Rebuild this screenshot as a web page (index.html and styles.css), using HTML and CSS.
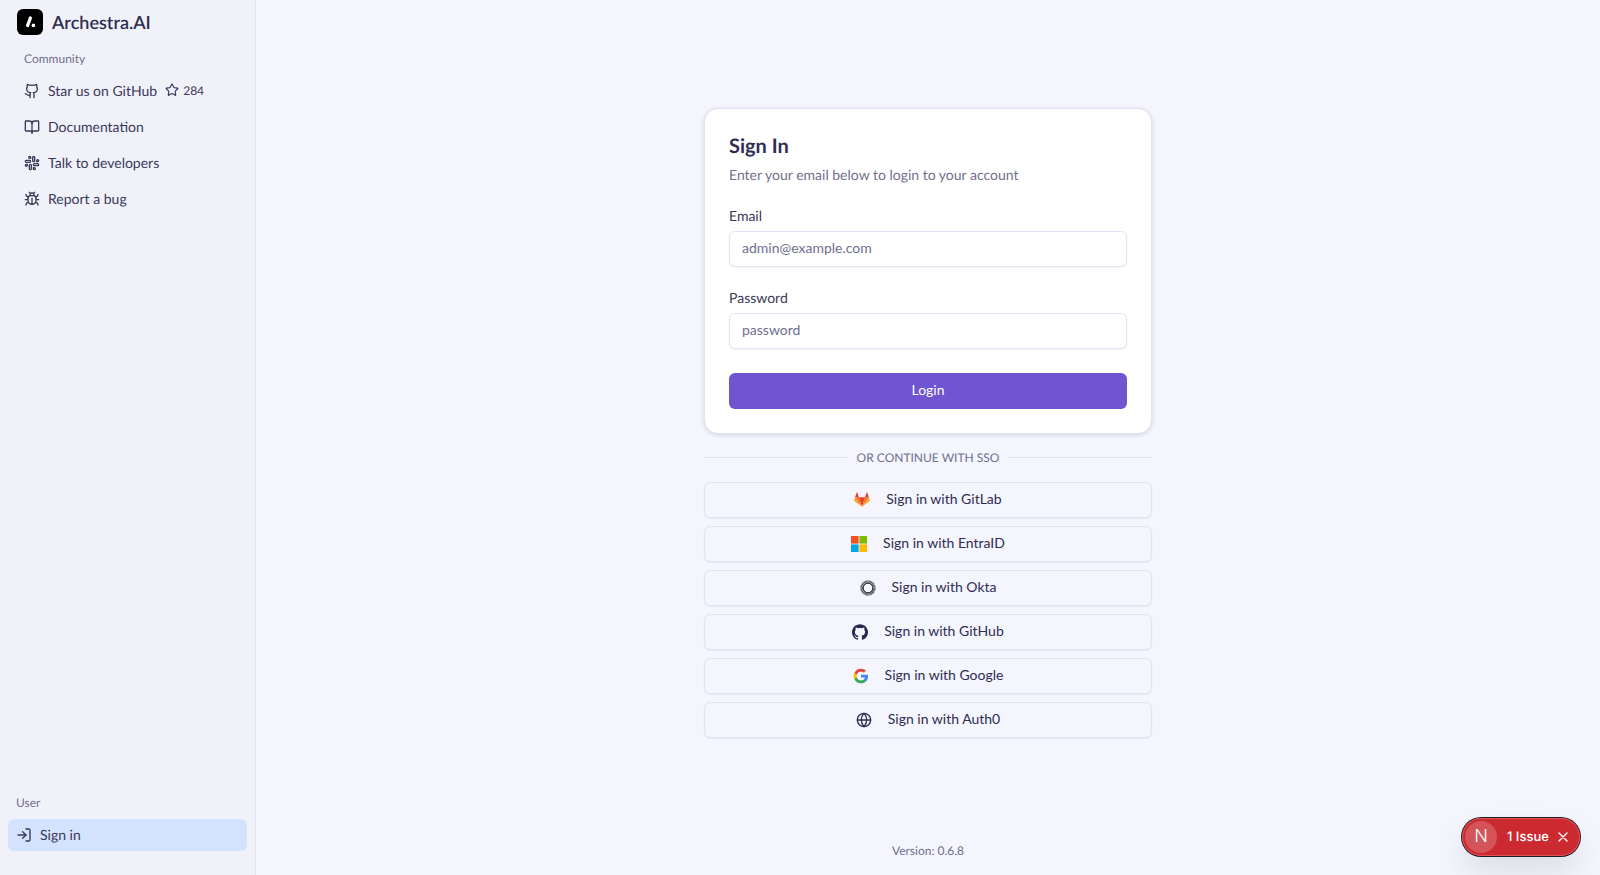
FILE: index.html
```html
<!DOCTYPE html>
<html lang="en">
<head>
    <meta charset="UTF-8">
    <meta name="viewport" content="width=device-width, initial-scale=1.0">
    <title>Archestra.AI - Sign In</title>
    <link rel="stylesheet" href="styles.css">
</head>
<body>
    <aside class="sidebar">
        <div class="brand">
            <span class="brand-logo">
                <svg viewBox="0 0 26 26" width="26" height="26"><path d="M13.4 9 10.6 16.6" stroke="#fff" stroke-width="3.2" stroke-linecap="round" fill="none"/><circle cx="16.4" cy="16.4" r="1.8" fill="#fff"/></svg>
            </span>
            <span class="brand-name">Archestra.AI</span>
        </div>

        <div class="group-label community-label">Community</div>
        <nav class="menu">
            <a class="menu-item" href="#">
                <svg class="icon" viewBox="0 0 24 24"><path d="M15 22v-4a4.8 4.8 0 0 0-1-3.5c3 0 6-2 6-5.5.08-1.25-.27-2.48-1-3.5.28-1.15.28-2.35 0-3.5 0 0-1 0-3 1.5-2.64-.5-5.36-.5-8 0C6 2 5 2 5 2c-.3 1.15-.3 2.35 0 3.5A5.403 5.403 0 0 0 4 9c0 3.5 3 5.5 6 5.5-.39.49-.68 1.05-.85 1.65-.17.6-.22 1.23-.15 1.85v4"/><path d="M9 18c-4.51 2-5-2-7-2"/></svg>
                <span>Star us on GitHub</span>
                <span class="stars">
                    <svg class="icon-star" viewBox="0 0 24 24"><path d="M11.525 2.295a.53.53 0 0 1 .95 0l2.31 4.679a2.123 2.123 0 0 0 1.595 1.16l5.166.756a.53.53 0 0 1 .294.904l-3.736 3.638a2.123 2.123 0 0 0-.611 1.878l.882 5.14a.53.53 0 0 1-.771.56l-4.618-2.428a2.122 2.122 0 0 0-1.973 0L6.396 21.01a.53.53 0 0 1-.77-.56l.881-5.139a2.122 2.122 0 0 0-.611-1.879L2.16 9.795a.53.53 0 0 1 .294-.906l5.165-.755a2.122 2.122 0 0 0 1.597-1.16z"/></svg>
                    284
                </span>
            </a>
            <a class="menu-item" href="#">
                <svg class="icon" viewBox="0 0 24 24"><path d="M12 7v14"/><path d="M3 18a1 1 0 0 1-1-1V4a1 1 0 0 1 1-1h5a4 4 0 0 1 4 4 4 4 0 0 1 4-4h5a1 1 0 0 1 1 1v13a1 1 0 0 1-1 1h-6a3 3 0 0 0-3 3 3 3 0 0 0-3-3z"/></svg>
                <span>Documentation</span>
            </a>
            <a class="menu-item" href="#">
                <svg class="icon" viewBox="0 0 24 24"><rect x="13" y="2" width="3" height="8" rx="1.5"/><path d="M19 8.5V10h1.5A1.5 1.5 0 1 0 19 8.5"/><rect x="8" y="14" width="3" height="8" rx="1.5"/><path d="M5 15.5V14H3.5A1.5 1.5 0 1 0 5 15.5"/><rect x="14" y="13" width="8" height="3" rx="1.5"/><path d="M15.5 19H14v1.5a1.5 1.5 0 1 0 1.5-1.5"/><rect x="2" y="8" width="8" height="3" rx="1.5"/><path d="M8.5 5H10V3.5A1.5 1.5 0 1 0 8.5 5"/></svg>
                <span>Talk to developers</span>
            </a>
            <a class="menu-item" href="#">
                <svg class="icon" viewBox="0 0 24 24"><path d="m8 2 1.88 1.88"/><path d="M14.12 3.88 16 2"/><path d="M9 7.13v-1a3.003 3.003 0 1 1 6 0v1"/><path d="M12 20c-3.3 0-6-2.7-6-6v-3a4 4 0 0 1 4-4h4a4 4 0 0 1 4 4v3c0 3.3-2.7 6-6 6"/><path d="M12 20v-9"/><path d="M6.53 9C4.6 8.8 3 7.1 3 5"/><path d="M6 13H2"/><path d="M3 21c0-2.1 1.7-3.9 3.8-4"/><path d="M20.97 5c0 2.1-1.6 3.8-3.5 4"/><path d="M22 13h-4"/><path d="M17.2 17c2.1.1 3.8 1.9 3.8 4"/></svg>
                <span>Report a bug</span>
            </a>
        </nav>

        <div class="sidebar-footer">
            <div class="group-label user-label">User</div>
            <a class="signin-link" href="#">
                <svg class="icon" viewBox="0 0 24 24"><path d="M15 3h4a2 2 0 0 1 2 2v14a2 2 0 0 1-2 2h-4"/><polyline points="10 17 15 12 10 7"/><line x1="15" y1="12" x2="3" y2="12"/></svg>
                <span>Sign in</span>
            </a>
        </div>
    </aside>

    <main class="main">
        <div class="content">
            <div class="auth">
                <section class="card">
                    <h2>Sign In</h2>
                    <p class="card-desc">Enter your email below to login to your account</p>
                    <form class="form">
                        <div class="field">
                            <label for="email">Email</label>
                            <input type="email" id="email" placeholder="admin@example.com">
                        </div>
                        <div class="field">
                            <label for="password">Password</label>
                            <input type="text" id="password" placeholder="password">
                        </div>
                        <button type="button" class="login-btn">Login</button>
                    </form>
                </section>

                <div class="separator"><span>Or continue with SSO</span></div>

                <div class="sso-list">
                    <button type="button" class="sso-btn">
                        <svg class="sso-icon" viewBox="0 0 24 24"><path fill="#E24329" d="M12 22 16.6 8H7.4z"/><path fill="#FC6D26" d="M12 22 7.4 8H1.6z"/><path fill="#FC6D26" d="M12 22 16.6 8h5.8z"/><path fill="#FCA326" d="M1.6 8 .2 12.4a1 1 0 0 0 .4 1.1L12 22z"/><path fill="#FCA326" d="M22.4 8l1.4 4.4a1 1 0 0 1-.4 1.1L12 22z"/><path fill="#E24329" d="M1.6 8h5.8L4.9.9a.4.4 0 0 0-.8 0z"/><path fill="#E24329" d="M22.4 8h-5.8L19.1.9a.4.4 0 0 1 .8 0z"/></svg>
                        <span>Sign in with GitLab</span>
                    </button>
                    <button type="button" class="sso-btn">
                        <svg class="sso-icon" viewBox="0 0 24 24"><rect x="0" y="0" width="11.4" height="11.4" fill="#F25022"/><rect x="12.6" y="0" width="11.4" height="11.4" fill="#7FBA00"/><rect x="0" y="12.6" width="11.4" height="11.4" fill="#00A4EF"/><rect x="12.6" y="12.6" width="11.4" height="11.4" fill="#FFB900"/></svg>
                        <span>Sign in with EntraID</span>
                    </button>
                    <button type="button" class="sso-btn">
                        <svg class="sso-icon" viewBox="0 0 24 24"><circle cx="12" cy="12" r="9" fill="none" stroke="#2b2b33" stroke-width="5" stroke-dasharray="1 .7"/><circle cx="12" cy="12" r="7.2" fill="none" stroke="#2b2b33" stroke-width="1.4"/></svg>
                        <span>Sign in with Okta</span>
                    </button>
                    <button type="button" class="sso-btn">
                        <svg class="sso-icon github-mark" viewBox="0 0 24 24"><path d="M12 .297c-6.63 0-12 5.373-12 12 0 5.303 3.438 9.8 8.205 11.385.6.113.82-.258.82-.577 0-.285-.01-1.04-.015-2.04-3.338.724-4.042-1.61-4.042-1.61C4.422 18.07 3.633 17.7 3.633 17.7c-1.087-.744.084-.729.084-.729 1.205.084 1.838 1.236 1.838 1.236 1.07 1.835 2.809 1.305 3.495.998.108-.776.417-1.305.76-1.605-2.665-.3-5.466-1.332-5.466-5.93 0-1.31.465-2.38 1.235-3.22-.135-.303-.54-1.523.105-3.176 0 0 1.005-.322 3.3 1.23.96-.267 1.98-.399 3-.405 1.02.006 2.04.138 3 .405 2.28-1.552 3.285-1.23 3.285-1.23.645 1.653.24 2.873.12 3.176.765.84 1.23 1.91 1.23 3.22 0 4.61-2.805 5.625-5.475 5.92.42.36.81 1.096.81 2.22 0 1.606-.015 2.896-.015 3.286 0 .315.21.69.825.57C20.565 22.092 24 17.592 24 12.297c0-6.627-5.373-12-12-12"/></svg>
                        <span>Sign in with GitHub</span>
                    </button>
                    <button type="button" class="sso-btn">
                        <svg class="sso-icon" viewBox="0 0 24 24"><path fill="#4285F4" d="M22.56 12.25c0-.78-.07-1.53-.2-2.25H12v4.26h5.92c-.26 1.37-1.04 2.53-2.21 3.31v2.77h3.57c2.08-1.92 3.28-4.74 3.28-8.09z"/><path fill="#34A853" d="M12 23c2.97 0 5.46-.98 7.28-2.66l-3.57-2.77c-.98.66-2.23 1.06-3.71 1.06-2.86 0-5.29-1.93-6.16-4.53H2.18v2.84C3.99 20.53 7.7 23 12 23z"/><path fill="#FBBC05" d="M5.84 14.09c-.22-.66-.35-1.36-.35-2.09s.13-1.43.35-2.09V7.07H2.18C1.43 8.55 1 10.22 1 12s.43 3.45 1.18 4.93l2.85-2.22.81-.62z"/><path fill="#EA4335" d="M12 5.38c1.62 0 3.06.56 4.21 1.64l3.15-3.15C17.45 2.09 14.97 1 12 1 7.7 1 3.99 3.47 2.18 7.07l3.66 2.84c.87-2.6 3.3-4.53 6.16-4.53z"/></svg>
                        <span>Sign in with Google</span>
                    </button>
                    <button type="button" class="sso-btn">
                        <svg class="sso-icon icon" viewBox="0 0 24 24"><circle cx="12" cy="12" r="10"/><path d="M12 2a14.5 14.5 0 0 0 0 20 14.5 14.5 0 0 0 0-20"/><path d="M2 12h20"/></svg>
                        <span>Sign in with Auth0</span>
                    </button>
                </div>
            </div>
        </div>
        <footer class="version">Version: 0.6.8</footer>
    </main>

    <div class="issue-badge">
        <span class="issue-logo">N</span>
        <span class="issue-text">1 Issue</span>
        <svg class="issue-close" viewBox="0 0 12 12"><path d="M2 2l8 8M10 2l-8 8"/></svg>
    </div>
</body>
</html>
```

FILE: styles.css
```css
* {
    box-sizing: border-box;
}

body {
    font-family: Lato, "Noto Sans", sans-serif;
    font-size: 14px;
    margin: 0;
    height: 875px;
    overflow: hidden;
    display: flex;
    background-color: #f4f5fd;
    color: #2f2d52;
    text-rendering: geometricPrecision;
}

a {
    color: inherit;
    text-decoration: none;
}

.icon {
    width: 16px;
    height: 16px;
    flex-shrink: 0;
    fill: none;
    stroke: currentColor;
    stroke-width: 2;
    stroke-linecap: round;
    stroke-linejoin: round;
}

/* sidebar */
.sidebar {
    width: 256px;
    flex-shrink: 0;
    display: flex;
    flex-direction: column;
    background-color: #f1f2f9;
    border-right: 1px solid #e3e3f1;
    padding-bottom: 24px;
}

.brand {
    display: flex;
    align-items: center;
    gap: 9px;
    padding: 9px 0 0 17px;
}

.brand-logo {
    width: 26px;
    height: 26px;
    background-color: #000;
    border-radius: 6px;
}

.brand-logo svg {
    display: block;
}

.brand-name {
    font-size: 18px;
    font-weight: 600;
    line-height: 26px;
}

.group-label {
    font-size: 12px;
    line-height: 16px;
    color: #6f6f8e;
}

.community-label {
    margin: 16px 0 6px 24px;
}

.menu-item {
    display: flex;
    align-items: center;
    height: 36px;
    padding: 0 0 2px 24px;
    gap: 8px;
    color: #3a3859;
}

.menu-item .icon {
    margin-top: 2px;
}

.stars {
    display: flex;
    align-items: center;
    gap: 4px;
    font-size: 12px;
}

.icon-star {
    width: 14px;
    height: 14px;
    fill: none;
    stroke: currentColor;
    stroke-width: 2;
    stroke-linejoin: round;
}

.sidebar-footer {
    margin-top: auto;
}

.user-label {
    margin: 0 0 8px 16px;
}

.signin-link {
    display: flex;
    align-items: center;
    gap: 8px;
    height: 32px;
    margin: 0 8px;
    padding: 0 0 2px 8px;
    border-radius: 6px;
    background-color: #d3e2fd;
    color: #3a3859;
}

.signin-link .icon {
    margin-top: 2px;
}

/* main */
.main {
    flex: 1;
    display: flex;
    flex-direction: column;
}

.content {
    flex: 1;
    display: flex;
    align-items: center;
    justify-content: center;
    padding-top: 4px;
}

.auth {
    width: 448px;
}

.card {
    background: white;
    border: 1px solid #e3e3f3;
    border-radius: 14px;
    padding: 24px;
    box-shadow: 0 1px 4px rgba(40, 40, 80, 0.16);
}

h2 {
    margin: -1px 0 1px;
    font-size: 20px;
    font-weight: 700;
    line-height: 28px;
}

.card-desc {
    margin: 5px 0 0;
    line-height: 20px;
    color: #6f6f8e;
}

.form {
    margin-top: 24px;
    display: flex;
    flex-direction: column;
    gap: 24px;
}

.field {
    display: flex;
    flex-direction: column;
    gap: 8px;
}

label {
    line-height: 14px;
    color: #3a3859;
}

input {
    height: 36px;
    padding: 0 12px 2px;
    font-family: inherit;
    font-size: 14px;
    background: white;
    border: 1px solid #e3e3f3;
    border-radius: 6px;
    box-shadow: 0 1px 2px rgba(40, 40, 80, 0.05);
}

input::placeholder {
    color: #6f6f8e;
    opacity: 1;
}

.login-btn {
    height: 36px;
    padding: 0 0 2px;
    background-color: #6f55cf;
    color: white;
    border: none;
    border-radius: 6px;
    font-family: inherit;
    font-size: 14px;
    cursor: pointer;
}

.separator {
    display: flex;
    align-items: center;
    gap: 9px;
    margin-top: 16px;
    font-size: 12px;
    line-height: 16px;
    color: #6f6f8e;
    text-transform: uppercase;
}

.separator::before,
.separator::after {
    content: "";
    flex: 1;
    height: 1px;
    background-color: #e0e0ee;
}

.sso-list {
    margin-top: 16px;
    display: flex;
    flex-direction: column;
    gap: 8px;
}

.sso-btn {
    height: 36px;
    padding: 0 0 2px;
    display: flex;
    align-items: center;
    justify-content: center;
    gap: 16px;
    background-color: #f4f5fd;
    border: 1px solid #e3e3f1;
    border-radius: 6px;
    box-shadow: 0 1px 2px rgba(40, 40, 80, 0.06);
    font-family: inherit;
    font-size: 14px;
    color: #2f2d52;
    cursor: pointer;
}

.sso-icon {
    width: 16px;
    height: 16px;
    margin-top: 2px;
    flex-shrink: 0;
}

.github-mark {
    fill: #2a2850;
}

.version {
    height: 34px;
    font-size: 12px;
    line-height: 20px;
    text-align: center;
    color: #6f6f8e;
}

/* dev overlay badge */
.issue-badge {
    position: absolute;
    left: 1462px;
    top: 818px;
    width: 118px;
    height: 38px;
    display: flex;
    align-items: center;
    padding-left: 3px;
    background-color: #ca2a30;
    border-radius: 19px;
    box-shadow: 0 0 0 1px #1c1c24, inset 0 0 0 1px #e4555a, 0 16px 32px rgba(0, 0, 0, 0.1);
    color: white;
}

.issue-logo {
    width: 32px;
    height: 32px;
    border-radius: 50%;
    background-color: rgba(255, 255, 255, 0.2);
    font-family: Inter, sans-serif;
    font-size: 18px;
    font-weight: 300;
    line-height: 32px;
    text-align: center;
}

.issue-text {
    margin-left: 10px;
    font-family: Inter, sans-serif;
    font-size: 13px;
    font-weight: 500;
}

.issue-close {
    width: 12px;
    height: 12px;
    margin-left: 8px;
    fill: none;
    stroke: white;
    stroke-width: 1.4;
    stroke-linecap: round;
}
```
